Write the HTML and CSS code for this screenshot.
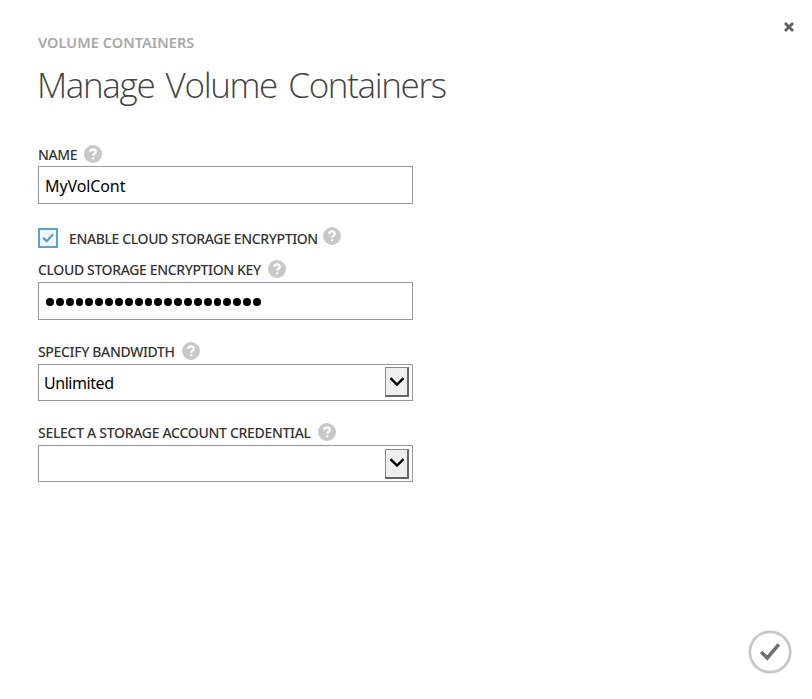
FILE: index.html
```html
<!DOCTYPE html>
<html lang="en">
<head>
<meta charset="utf-8">
<title>Manage Volume Containers</title>
<link rel="stylesheet" href="styles.css">
</head>
<body>
<main class="dialog">
  <svg class="close" viewBox="0 0 12 12"><path d="M2 2L10 10M10 2L2 10"/></svg>
  <header>
    <div class="crumb"><span class="t-crumb">VOLUME CONTAINERS</span></div>
    <h1>Manage Volume Containers</h1>
  </header>
  <form class="form">
    <div class="label name-label"><span class="t-name">NAME</span><svg class="help" viewBox="0 0 18 18"><circle cx="9" cy="9" r="9"/><path d="M6.2 6.9Q6.3 4.4 9 4.4Q11.8 4.4 11.8 6.8Q11.8 8 10.4 8.8Q9.2 9.5 9.2 10.8M9.2 12.2V14.2"/></svg></div>
    <div class="field"><span class="t-value">MyVolCont</span></div>
    <div class="check-row">
      <span class="checkbox"><svg viewBox="0 0 16 16"><path d="M3.2 7.8L6.8 11.2L13 4.2"/></svg></span>
      <span class="t-enable">ENABLE CLOUD STORAGE ENCRYPTION</span><svg class="help raised" viewBox="0 0 18 18"><circle cx="9" cy="9" r="9"/><path d="M6.2 6.9Q6.3 4.4 9 4.4Q11.8 4.4 11.8 6.8Q11.8 8 10.4 8.8Q9.2 9.5 9.2 10.8M9.2 12.2V14.2"/></svg>
    </div>
    <div class="label key-label"><span class="t-key">CLOUD STORAGE ENCRYPTION KEY</span><svg class="help" viewBox="0 0 18 18"><circle cx="9" cy="9" r="9"/><path d="M6.2 6.9Q6.3 4.4 9 4.4Q11.8 4.4 11.8 6.8Q11.8 8 10.4 8.8Q9.2 9.5 9.2 10.8M9.2 12.2V14.2"/></svg></div>
    <div class="field password"><i></i><i></i><i></i><i></i><i></i><i></i><i></i><i></i><i></i><i></i><i></i><i></i><i></i><i></i><i></i><i></i><i></i><i></i><i></i><i></i><i></i><i></i></div>
    <div class="label band-label"><span class="t-band">SPECIFY BANDWIDTH</span><svg class="help" viewBox="0 0 18 18"><circle cx="9" cy="9" r="9"/><path d="M6.2 6.9Q6.3 4.4 9 4.4Q11.8 4.4 11.8 6.8Q11.8 8 10.4 8.8Q9.2 9.5 9.2 10.8M9.2 12.2V14.2"/></svg></div>
    <div class="field select"><span class="t-option">Unlimited</span><span class="arrow"><svg viewBox="0 0 16 10"><path d="M1.5 1.2L8 7.5L14.5 1.2"/></svg></span></div>
    <div class="label cred-label"><span class="t-cred">SELECT A STORAGE ACCOUNT CREDENTIAL</span><svg class="help" viewBox="0 0 18 18"><circle cx="9" cy="9" r="9"/><path d="M6.2 6.9Q6.3 4.4 9 4.4Q11.8 4.4 11.8 6.8Q11.8 8 10.4 8.8Q9.2 9.5 9.2 10.8M9.2 12.2V14.2"/></svg></div>
    <div class="field select last"><span></span><span class="arrow"><svg viewBox="0 0 16 10"><path d="M1.5 1.2L8 7.5L14.5 1.2"/></svg></span></div>
  </form>
  <svg class="confirm" viewBox="0 0 44 44"><circle cx="22" cy="22" r="20.2"/><path d="M13.2 22L19.2 28L30.8 14.4"/></svg>
</main>
</body>
</html>
```
FILE: styles.css
```css
* { box-sizing: border-box; }
body { margin: 0; background: #fff; font-family: "Noto Sans", "Open Sans", sans-serif; }
svg { display: block; flex: none; fill: none; }
.dialog { position: relative; width: 812px; height: 699px; padding: 32px 0 0 38px; overflow: hidden; }
.close { position: absolute; left: 783px; top: 20.5px; width: 12px; height: 12px; stroke: #606060; stroke-width: 2.8; }
.confirm { position: absolute; left: 748px; top: 629.5px; width: 44px; height: 44px; stroke: #c8c8c8; stroke-width: 2.8; }
.confirm path { stroke: #707070; stroke-width: 3.6; }
.crumb { display: flex; align-items: center; height: 21px; font-size: 14.5px; font-weight: 600; color: #a8a8a8; white-space: nowrap; }
.t-crumb { letter-spacing: 0.05px; padding-bottom: 2px; }
h1 { margin: 7px 0 0 -1px; height: 50px; line-height: 50px; font-family: "Open Sans", sans-serif; font-size: 35px; font-weight: 300; letter-spacing: -1.35px; word-spacing: 3.6px; color: #444; white-space: nowrap; }
.form { width: 375px; }
.label { display: flex; align-items: center; height: 24px; font-size: 14px; font-weight: 500; color: #333; white-space: nowrap; }
.name-label { margin-top: 32px; }
.t-name { letter-spacing: -0.35px; }
.t-enable { letter-spacing: -0.38px; padding-top: 1px; }
.t-key { letter-spacing: -0.37px; }
.t-band { letter-spacing: -0.35px; }
.t-cred { letter-spacing: -0.3px; }
.t-value { letter-spacing: -0.1px; padding-top: 2px; }
.t-option { letter-spacing: -0.45px; padding-top: 1px; }
.help { width: 18px; height: 18px; margin-left: 7px; stroke: #fff; stroke-width: 2.2; }
.help circle { fill: #c8c8c8; stroke: none; }
.field { display: flex; align-items: center; height: 38px; padding-left: 6px; border: 1px solid #999; font-size: 16px; color: #000; }
.check-row { display: flex; align-items: center; height: 22px; margin-top: 23px; font-size: 14px; font-weight: 500; color: #333; white-space: nowrap; }
.checkbox { width: 20px; height: 20px; margin-right: 11px; border: 2px solid #55a3cf; background: #f5f5f5; }
.checkbox svg { width: 16px; height: 16px; stroke: #3b9bd0; stroke-width: 2; }
.raised { margin: -5px 0 0 5px; }
.key-label { margin: 8px 0 1px; }
.password { gap: 2.07px; padding-left: 7px; }
.password i { width: 7.8px; height: 7.8px; margin-top: 2px; border-radius: 50%; background: #000; }
.band-label { margin: 19px 0 1px; }
.select { height: 37px; justify-content: space-between; padding: 0 3px 1px 5px; }
.arrow { display: flex; align-items: center; justify-content: center; width: 24px; height: 30px; background: #efefef; border: 1px solid #888; border-right: 2px solid #666; border-bottom: 2px solid #666; }
.arrow svg { width: 16px; height: 10px; stroke: #000; stroke-width: 2.4; }
.cred-label { margin: 19px 0 1px; }
.last { padding-bottom: 0; }
```
